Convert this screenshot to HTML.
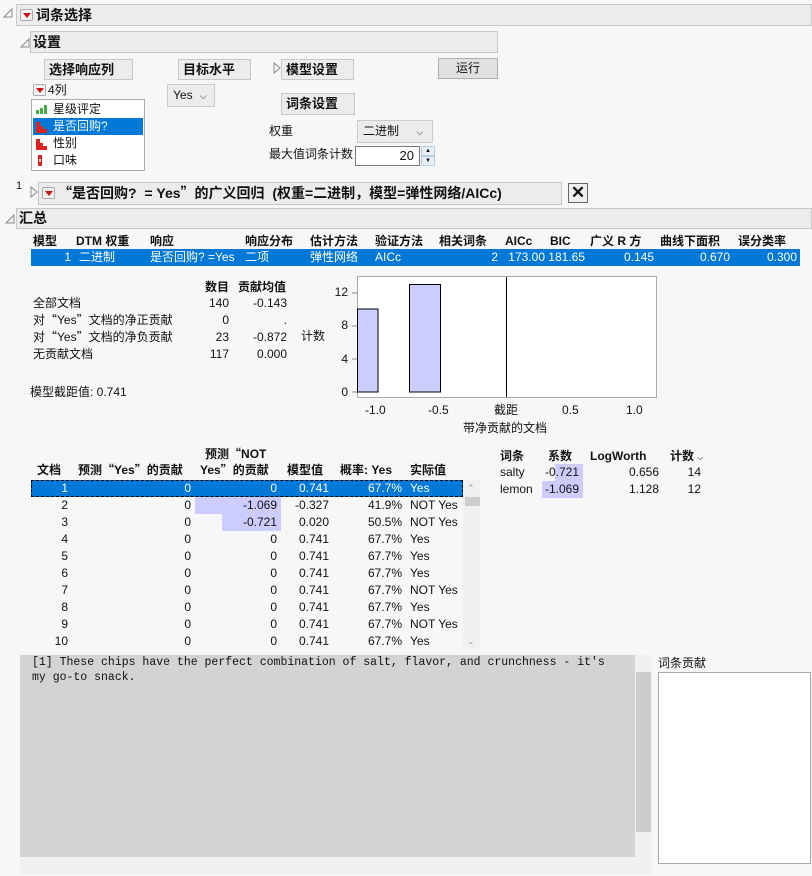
<!DOCTYPE html>
<html><head><meta charset="utf-8"><style>
*{box-sizing:border-box;margin:0;padding:0}
body{width:812px;height:876px;background:#f7f7f7;position:relative;overflow:hidden;font-family:"Liberation Sans","Noto Sans CJK SC",sans-serif;font-size:12px;color:#111}
.a{position:absolute;white-space:nowrap;line-height:16px}
.b{font-weight:bold}
.q{font-family:"Noto Sans CJK SC",sans-serif}
.hdr{position:absolute;background:#ececec;border:1px solid #c8c8c8}
.btn{position:absolute;background:#ececec;border:1px solid #c8c8c8;font-weight:bold;font-size:13px;padding-left:4px;line-height:19px}
.rd{position:absolute;width:13px;height:12px;border:1px solid #aaa;background:#f2f2f2;border-radius:2px}
.rd:after{content:"";position:absolute;left:2px;top:3px;border-left:4px solid transparent;border-right:4px solid transparent;border-top:5px solid #d01010}
.r{text-align:right}
.sel{position:absolute;background:#0078d7}
.w{color:#fff}
.hl{position:absolute;background:#ccccff}
</style></head><body>
<svg class="a" style="left:3px;top:8px" width="10" height="10"><path d="M1 9 L9 1 L9 9 Z" fill="none" stroke="#888"/></svg>
<div class="hdr" style="left:16px;top:4px;width:796px;height:22px"></div>
<div class="rd" style="left:20px;top:9px"></div>
<div class="a b" style="left:36px;top:6px;font-size:14px;line-height:18px">词条选择</div>
<svg class="a" style="left:20px;top:38px" width="10" height="10"><path d="M1 9 L9 1 L9 9 Z" fill="none" stroke="#888"/></svg>
<div class="hdr" style="left:30px;top:31px;width:468px;height:22px"></div>
<div class="a b" style="left:33px;top:33px;font-size:14px;line-height:18px">设置</div>

<div class="btn" style="left:44px;top:59px;width:89px;height:21px">选择响应列</div>
<div class="btn" style="left:178px;top:59px;width:73px;height:21px">目标水平</div>
<svg class="a" style="left:273px;top:62px" width="8" height="12"><path d="M1 1 L7 6 L1 11 Z" fill="none" stroke="#888"/></svg>
<div class="btn" style="left:281px;top:59px;width:73px;height:21px">模型设置</div>
<div class="a" style="left:438px;top:58px;width:60px;height:21px;background:#e1e1e1;border:1px solid #adadad;text-align:center;line-height:19px">运行</div>

<div class="rd" style="left:33px;top:84px"></div>
<div class="a" style="left:48px;top:82px">4列</div>
<div class="a" style="left:31px;top:99px;width:114px;height:72px;background:#fff;border:1px solid #aaa"></div>
<svg class="a" style="left:36px;top:104px" width="14" height="10"><rect x="0" y="6" width="3" height="4" fill="#4a4"/><rect x="4" y="4" width="3" height="6" fill="#4a4"/><rect x="8" y="1" width="3" height="9" fill="#4a4"/></svg>
<div class="a" style="left:53px;top:101px">星级评定</div>
<div class="sel" style="left:33px;top:118px;width:110px;height:17px"></div>
<svg class="a" style="left:36px;top:121px" width="14" height="12"><rect x="0" y="1" width="4" height="11" fill="#d22"/><rect x="4" y="5" width="3" height="7" fill="#d22"/><rect x="7" y="8" width="4" height="4" fill="#d22"/></svg>
<div class="a w" style="left:53px;top:118px">是否回购?</div>
<svg class="a" style="left:36px;top:138px" width="14" height="12"><rect x="0" y="1" width="4" height="11" fill="#d22"/><rect x="4" y="5" width="3" height="7" fill="#d22"/><rect x="7" y="8" width="4" height="4" fill="#d22"/></svg>
<div class="a" style="left:53px;top:135px">性别</div>
<svg class="a" style="left:38px;top:155px" width="6" height="12"><rect x="0" y="0" width="4" height="11" fill="#d22"/><rect x="1" y="4" width="2" height="3" fill="#fcc"/></svg>
<div class="a" style="left:53px;top:152px">口味</div>

<div class="a" style="left:167px;top:84px;width:48px;height:23px;background:#ececec;border:1px solid #ccc;line-height:21px;padding-left:5px">Yes <span style="font-size:9px;margin-left:4px">⌵</span></div>
<div class="btn" style="left:281px;top:93px;width:74px;height:22px">词条设置</div>
<div class="a" style="left:269px;top:123px">权重</div>
<div class="a" style="left:357px;top:120px;width:76px;height:23px;background:#ececec;border:1px solid #ccc;line-height:21px;padding-left:5px">二进制 <span style="font-size:9px;margin-left:14px">⌵</span></div>
<div class="a" style="left:269px;top:146px">最大值词条计数</div>
<div class="a r" style="left:355px;top:146px;width:65px;height:20px;background:#fff;border:1px solid #7a7a7a;padding-right:5px;line-height:18px;font-size:13px">20</div>
<div class="a" style="left:421px;top:146px;width:14px;height:10px;background:#e6eef8;border:1px solid #bcd;font-size:6px;text-align:center;line-height:8px">▲</div>
<div class="a" style="left:421px;top:156px;width:14px;height:10px;background:#e6eef8;border:1px solid #bcd;font-size:6px;text-align:center;line-height:8px">▼</div>

<div class="a" style="left:16px;top:178px;font-size:11px">1</div>
<svg class="a" style="left:30px;top:186px" width="8" height="12"><path d="M1 1 L7 6 L1 11 Z" fill="none" stroke="#888"/></svg>
<div class="hdr" style="left:38px;top:182px;width:524px;height:23px"></div>
<div class="rd" style="left:42px;top:187px"></div>
<div class="a b" style="left:58px;top:184px;font-size:14px;line-height:18px"><span class="q">“</span>是否回购? &nbsp;= Yes<span class="q">”</span>的广义回归 &nbsp;(权重=二进制，模型=弹性网络/AICc)</div>
<div class="a" style="left:568px;top:183px;width:20px;height:20px;border:1px solid #666;background:#eee;font-size:17px;line-height:18px;text-align:center;font-weight:bold">✕</div>

<svg class="a" style="left:5px;top:214px" width="10" height="10"><path d="M1 9 L9 1 L9 9 Z" fill="none" stroke="#888"/></svg>
<div class="hdr" style="left:16px;top:208px;width:796px;height:21px"></div>
<div class="a b" style="left:19px;top:209px;font-size:14px;line-height:18px">汇总</div>

<div class="a b" style="top:233px;left:33px">模型</div>
<div class="a b" style="top:233px;left:76px">DTM 权重</div>
<div class="a b" style="top:233px;left:150px">响应</div>
<div class="a b" style="top:233px;left:245px">响应分布</div>
<div class="a b" style="top:233px;left:310px">估计方法</div>
<div class="a b" style="top:233px;left:375px">验证方法</div>
<div class="a b" style="top:233px;left:439px">相关词条</div>
<div class="a b" style="top:233px;left:505px">AICc</div>
<div class="a b" style="top:233px;left:550px">BIC</div>
<div class="a b" style="top:233px;left:590px">广义 R 方</div>
<div class="a b" style="top:233px;left:660px">曲线下面积</div>
<div class="a b" style="top:233px;left:738px">误分类率</div>
<div class="sel" style="left:31px;top:249px;width:769px;height:17px"></div>
<div class="a w r" style="top:249px;left:40px;width:31px">1</div>
<div class="a w" style="top:249px;left:79px">二进制</div>
<div class="a w" style="top:249px;left:150px">是否回购? =Yes</div>
<div class="a w" style="top:249px;left:245px">二项</div>
<div class="a w" style="top:249px;left:310px">弹性网络</div>
<div class="a w" style="top:249px;left:375px">AICc</div>
<div class="a w r" style="top:249px;left:460px;width:38px">2</div>
<div class="a w r" style="top:249px;left:500px;width:45px">173.00</div>
<div class="a w r" style="top:249px;left:545px;width:40px">181.65</div>
<div class="a w r" style="top:249px;left:600px;width:54px">0.145</div>
<div class="a w r" style="top:249px;left:670px;width:60px">0.670</div>
<div class="a w r" style="top:249px;left:740px;width:57px">0.300</div>

<div class="a b" style="top:279px;left:205px">数目</div>
<div class="a b" style="top:279px;left:238px">贡献均值</div>
<div class="a" style="top:295px;left:33px">全部文档</div>
<div class="a" style="top:312px;left:33px">对<span class="q">“</span>Yes<span class="q">”</span>文档的净正贡献</div>
<div class="a" style="top:329px;left:33px">对<span class="q">“</span>Yes<span class="q">”</span>文档的净负贡献</div>
<div class="a" style="top:346px;left:33px">无贡献文档</div>
<div class="a r" style="top:295px;left:190px;width:39px">140</div>
<div class="a r" style="top:312px;left:190px;width:39px">0</div>
<div class="a r" style="top:329px;left:190px;width:39px">23</div>
<div class="a r" style="top:346px;left:190px;width:39px">117</div>
<div class="a r" style="top:295px;left:240px;width:47px">-0.143</div>
<div class="a r" style="top:312px;left:240px;width:47px">.</div>
<div class="a r" style="top:329px;left:240px;width:47px">-0.872</div>
<div class="a r" style="top:346px;left:240px;width:47px">0.000</div>
<div class="a" style="top:384px;left:30px">模型截距值: 0.741</div>

<div class="a" style="top:328px;left:301px">计数</div>
<div class="a r" style="top:284px;left:330px;width:18px">12</div>
<div class="a r" style="top:317px;left:330px;width:18px">8</div>
<div class="a r" style="top:351px;left:330px;width:18px">4</div>
<div class="a r" style="top:384px;left:330px;width:18px">0</div>
<svg class="a" style="left:350px;top:275px" width="310" height="125">
<rect x="7.5" y="1.5" width="299" height="121" fill="#fff" stroke="#aaa"/>
<g stroke="#888"><line x1="2" y1="18" x2="7" y2="18"/><line x1="2" y1="51" x2="7" y2="51"/><line x1="2" y1="84" x2="7" y2="84"/><line x1="2" y1="117" x2="7" y2="117"/></g>
<rect x="7.5" y="34" width="20.5" height="83" fill="#ccccff" stroke="#000"/>
<rect x="59.5" y="9.5" width="31" height="107.5" fill="#ccccff" stroke="#000"/>
<line x1="156.5" y1="2" x2="156.5" y2="122" stroke="#000"/>
</svg>
<div class="a" style="top:402px;left:365px">-1.0</div>
<div class="a" style="top:402px;left:428px">-0.5</div>
<div class="a" style="top:402px;left:494px">截距</div>
<div class="a" style="top:402px;left:562px">0.5</div>
<div class="a" style="top:402px;left:626px">1.0</div>
<div class="a" style="top:420px;left:463px">带净贡献的文档</div>

<div class="a b" style="top:446px;left:205px">预测<span class="q">“</span>NOT</div>
<div class="a b" style="top:462px;left:37px">文档</div>
<div class="a b" style="top:462px;left:78px">预测<span class="q">“</span>Yes<span class="q">”</span>的贡献</div>
<div class="a b" style="top:462px;left:200px">Yes<span class="q">”</span>的贡献</div>
<div class="a b" style="top:462px;left:287px">模型值</div>
<div class="a b" style="top:462px;left:340px">概率: Yes</div>
<div class="a b" style="top:462px;left:410px">实际值</div>
<div class="sel" style="left:31px;top:480px;width:432px;height:17px;outline:1px dashed #000;outline-offset:-1px"></div>
<div class="hl" style="left:195px;top:497px;width:86px;height:17px"></div>
<div class="hl" style="left:222px;top:514px;width:59px;height:17px"></div>
<div class="a" style="left:463px;top:480px;width:17px;height:169px;background:#f0f0f0"></div>
<div class="a" style="left:465px;top:497px;width:15px;height:9px;background:#cdcdcd"></div>
<div class="a" style="left:467px;top:480px;font-size:9px;color:#999">⌃</div>
<div class="a" style="left:467px;top:633px;font-size:9px;color:#999">⌄</div>
<div id="rows"></div>
<script>
var d=[["1","0","0","0.741","67.7%","Yes"],["2","0","-1.069","-0.327","41.9%","NOT Yes"],["3","0","-0.721","0.020","50.5%","NOT Yes"],["4","0","0","0.741","67.7%","Yes"],["5","0","0","0.741","67.7%","Yes"],["6","0","0","0.741","67.7%","Yes"],["7","0","0","0.741","67.7%","NOT Yes"],["8","0","0","0.741","67.7%","Yes"],["9","0","0","0.741","67.7%","NOT Yes"],["10","0","0","0.741","67.7%","Yes"]];
var h="";d.forEach(function(r,i){var y=480+i*17,c=i==0?" w":"";
h+='<div class="a r'+c+'" style="top:'+y+'px;left:30px;width:38px">'+r[0]+'</div>';
h+='<div class="a r'+c+'" style="top:'+y+'px;left:150px;width:41px">'+r[1]+'</div>';
h+='<div class="a r'+c+'" style="top:'+y+'px;left:220px;width:57px">'+r[2]+'</div>';
h+='<div class="a r'+c+'" style="top:'+y+'px;left:280px;width:49px">'+r[3]+'</div>';
h+='<div class="a r'+c+'" style="top:'+y+'px;left:340px;width:62px">'+r[4]+'</div>';
h+='<div class="a'+c+'" style="top:'+y+'px;left:410px">'+r[5]+'</div>';});
document.getElementById("rows").innerHTML=h;
</script>

<div class="a b" style="top:448px;left:500px">词条</div>
<div class="a b" style="top:448px;left:548px">系数</div>
<div class="a b" style="top:448px;left:590px">LogWorth</div>
<div class="a b" style="top:448px;left:670px">计数 <span style="font-weight:normal;font-size:8px">⌵</span></div>
<div class="hl" style="left:555px;top:464px;width:28px;height:17px"></div>
<div class="hl" style="left:542px;top:481px;width:41px;height:17px"></div>
<div class="a" style="top:464px;left:500px">salty</div>
<div class="a" style="top:481px;left:500px">lemon</div>
<div class="a r" style="top:464px;left:530px;width:49px">-0.721</div>
<div class="a r" style="top:481px;left:530px;width:49px">-1.069</div>
<div class="a r" style="top:464px;left:600px;width:59px">0.656</div>
<div class="a r" style="top:481px;left:600px;width:59px">1.128</div>
<div class="a r" style="top:464px;left:670px;width:31px">14</div>
<div class="a r" style="top:481px;left:670px;width:31px">12</div>

<div class="a" style="left:20px;top:655px;width:615px;height:202px;background:#d3d3d3"></div>
<div class="a" style="left:635px;top:655px;width:17px;height:202px;background:#f0f0f0"></div>
<div class="a" style="left:636px;top:672px;width:15px;height:160px;background:#cdcdcd"></div>
<div class="a" style="left:20px;top:857px;width:632px;height:17px;background:#f0f0f0"></div>
<div class="a" style="left:30px;top:655px;width:605px;font-family:'Liberation Mono',monospace;font-size:11.5px;line-height:15px;padding-left:2px">[1] These chips have the perfect combination of salt, flavor, and crunchness - it's<br>my go-to snack.</div>
<div class="a" style="left:658px;top:655px">词条贡献</div>
<div class="a" style="left:658px;top:672px;width:153px;height:192px;background:#fff;border:1px solid #aaa"></div>
</body></html>
